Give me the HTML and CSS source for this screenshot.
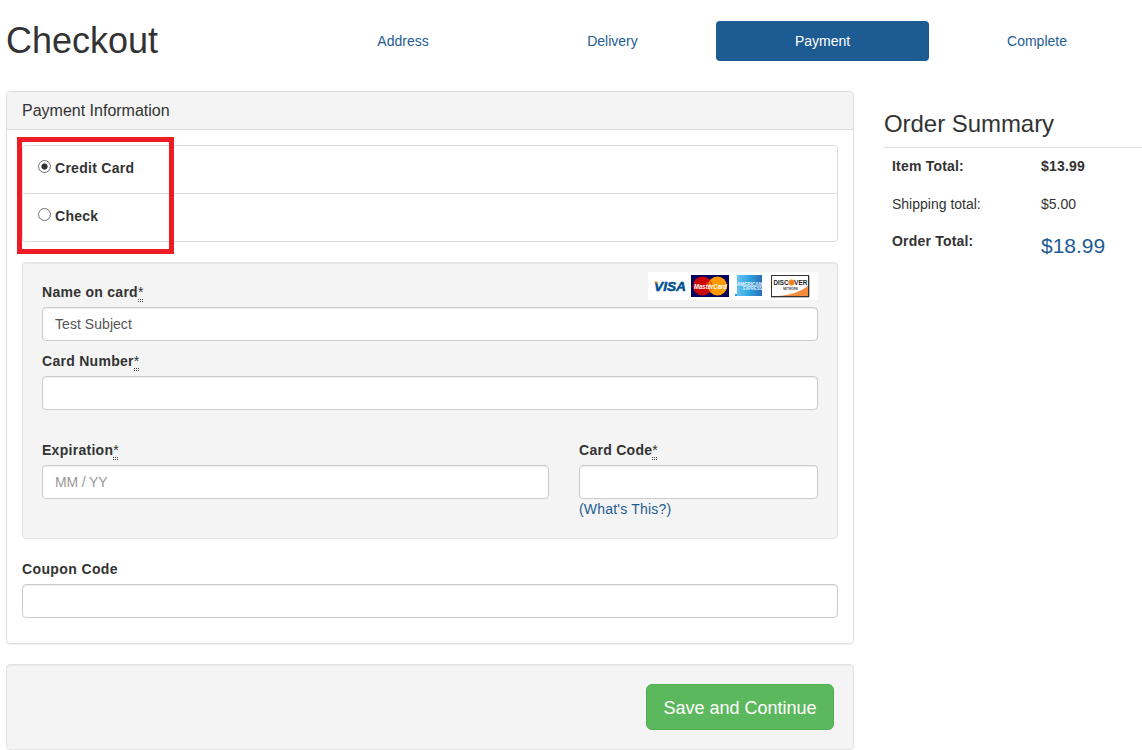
FILE: index.html
```html
<!DOCTYPE html>
<html lang="en">
<head>
<meta charset="utf-8">
<title>Checkout</title>
<link rel="stylesheet" href="styles.css">
</head>
<body>
<header class="top">
  <h1 class="title">Checkout</h1>
  <nav class="steps">
    <a class="step">Address</a>
    <a class="step">Delivery</a>
    <a class="step active">Payment</a>
    <a class="step">Complete</a>
  </nav>
</header>
<div class="columns">
  <main class="main">
    <section class="panel">
      <h2 class="panel-head">Payment Information</h2>
      <div class="panel-body">
        <div class="methods">
          <label class="method"><input class="radio" type="radio" name="method" checked><span class="bold">Credit Card</span></label>
          <label class="method"><input class="radio" type="radio" name="method"><span class="bold">Check</span></label>
          <div class="highlight"></div>
        </div>
        <div class="well card">
          <div class="label-row">
            <label class="bold" for="name">Name on card<abbr class="req">*</abbr></label>
            <svg class="logos" width="170" height="28" viewBox="0 0 170 28">
              <rect width="170" height="28" fill="#fff"/>
              <text x="6" y="18.800" class="visa" textLength="32" lengthAdjust="spacingAndGlyphs">VISA</text>
              <path d="M5.500 9.500h3.500l1.500 3z" fill="#f0a030"/>
              <rect x="43" y="3" width="38" height="22" fill="#00005f"/>
              <circle cx="54.500" cy="14" r="9.500" fill="#cc0505"/>
              <circle cx="69.500" cy="14" r="9.500" fill="#ff9900"/>
              <path d="M62 8.500a9.500 9.500 0 0 1 0 11M58 11h6M58 16.500h6" fill="none" stroke="#e65a00"/>
              <text x="46" y="16.700" class="mc" textLength="33" lengthAdjust="spacingAndGlyphs">MasterCard</text>
              <defs><linearGradient id="amex"><stop offset="0" stop-color="#65c3f2"/><stop offset=".5" stop-color="#2fa3df"/><stop offset="1" stop-color="#2c6db5"/></linearGradient></defs>
              <rect x="89" y="3" width="25" height="21" fill="url(#amex)"/>
              <rect x="87" y="22" width="2" height="2" fill="#2ba0df"/>
              <text x="89" y="13.500" class="amex" textLength="25" lengthAdjust="spacingAndGlyphs">AMERICAN</text>
              <text x="95" y="18.300" class="amex" textLength="19" lengthAdjust="spacingAndGlyphs">EXPRESS</text>
              <rect x="123.500" y="3.500" width="37" height="21" fill="#fff" stroke="#333"/>
              <path d="M131 24q18-1.500 29-10v10z" fill="#f58a3c"/>
              <circle cx="143.500" cy="10.500" r="3" fill="#f58220"/>
              <text x="125.500" y="13.200" class="disc" textLength="15" lengthAdjust="spacingAndGlyphs">DISC</text>
              <text x="146" y="13.200" class="disc" textLength="13.500" lengthAdjust="spacingAndGlyphs">VER</text>
              <text x="135" y="17.500" class="net" textLength="15" lengthAdjust="spacingAndGlyphs">NETWORK</text>
              <path d="M123 25.500h38M161.500 4v21" stroke="#bbb"/>
            </svg>
          </div>
          <input class="field" id="name" value="Test Subject">
          <label class="bold" for="number">Card Number<abbr class="req">*</abbr></label>
          <input class="field" id="number">
          <div class="pair">
            <div>
              <label class="bold" for="exp">Expiration<abbr class="req">*</abbr></label>
              <input class="field" id="exp" placeholder="MM / YY">
            </div>
            <div>
              <label class="bold" for="code">Card Code<abbr class="req">*</abbr></label>
              <input class="field" id="code">
              <a class="help">(What's This?)</a>
            </div>
          </div>
        </div>
        <label class="bold coupon" for="coupon">Coupon Code</label>
        <input class="field" id="coupon">
      </div>
    </section>
    <div class="well actions"><button class="save">Save and Continue</button></div>
  </main>
  <aside class="summary">
    <h2 class="summary-title">Order Summary</h2>
    <dl class="totals">
      <dt class="bold">Item Total:</dt><dd class="bold">$13.99</dd>
      <dt>Shipping total:</dt><dd>$5.00</dd>
      <dt class="bold">Order Total:</dt><dd class="grand">$18.99</dd>
    </dl>
  </aside>
</div>
</body>
</html>
```
FILE: styles.css
```css
* { box-sizing: border-box; }
html, body { height: 750px; overflow: hidden; }
body {
  margin: 0;
  padding-left: 6px;
  background: #fff;
  color: #333;
  font: 14px/20px "Liberation Sans", Arial, sans-serif;
}
h1, h2, dl, dd { margin: 0; font-weight: normal; }

.top { display: flex; height: 91px; }
.title { flex: none; width: 291px; padding-top: 21px; font-size: 36px; line-height: 40px; }
.steps { display: grid; grid-template-columns: 212px 207px 213px 216px; flex: none; height: 40px; margin-top: 21px; }
.step { padding: 10px 0; border-radius: 4px; text-align: center; color: #1d5c92; }
.step.active { background: #1d5c92; color: #fff; }

.columns { display: flex; gap: 30px; }
.main { flex: none; width: 848px; }
.panel { height: 553px; border: 1px solid #ddd; border-radius: 4px; box-shadow: 0 1px 1px rgba(0,0,0,.05); }
.panel-head { height: 38px; padding: 10px 15px 9px; border-bottom: 1px solid #ddd; border-radius: 3px 3px 0 0; background: #f4f4f4; font-size: 16px; line-height: 18px; }
.panel-body { padding: 15px; }

.methods { position: relative; height: 97px; margin-bottom: 20px; border: 1px solid #ddd; border-radius: 4px; }
.method { display: flex; gap: 4px; height: 47px; padding: 12px 15px 0; }
.method + .method { height: 48px; border-top: 1px solid #ddd; }
.radio { appearance: none; flex: none; width: 13px; height: 13px; margin: 2px 0 0; border: 1px solid #707070; border-radius: 50%; background: #fff; }
.radio:checked { background: radial-gradient(circle, #333 0 2.700px, #fff 3.500px); }
.highlight { position: absolute; left: -6px; top: -9px; width: 157px; height: 117px; border: 5px solid #ed1c24; }

.bold { font-weight: bold; letter-spacing: .28px; }
dl .bold { letter-spacing: .2px; }
label.bold { display: block; height: 20px; margin-bottom: 5px; }
label.coupon { letter-spacing: .38px; }
.req {
  padding-bottom: 2px;
  background:
    repeating-linear-gradient(90deg, #444 0 1px, transparent 1px 2px) 0 100% / 100% 1px no-repeat,
    repeating-linear-gradient(90deg, #444 0 1px, transparent 1px 2px) 0 calc(100% - 2px) / 100% 1px no-repeat;
  font-weight: normal;
  letter-spacing: 0;
  text-decoration: none;
}
.well { border: 1px solid #e3e3e3; border-radius: 4px; background: #f4f4f4; box-shadow: inset 0 1px 1px rgba(0,0,0,.05); }
.card { height: 277px; margin-bottom: 20px; padding: 9px 19px 0; }
.label-row { display: flex; justify-content: space-between; height: 35px; }
.label-row .bold { margin-top: 10px; }
.logos { display: block; font-family: "Liberation Sans", Arial, sans-serif; font-weight: bold; }
.visa { fill: #005092; stroke: #005092; stroke-width: .5px; font-size: 13px; font-style: italic; }
.mc { fill: #fff; font-size: 7.500px; font-style: italic; }
.amex { fill: #e9f6ff; font-size: 5px; }
.disc { fill: #222; font-size: 7.500px; }
.net { fill: #444; font-size: 3px; }

.field { display: block; width: 100%; height: 34px; padding: 6px 12px; border: 1px solid #ccc; border-radius: 4px; background: #fff; box-shadow: inset 0 1px 1px rgba(0,0,0,.075); color: #555; font: inherit; letter-spacing: .05px; }
.field::placeholder { color: #999; opacity: 1; letter-spacing: -.15px; }
.card > .field + .bold { margin-top: 10px; }
.pair { display: grid; grid-template-columns: 507px 239px; gap: 30px; margin-top: 30px; }
.help { color: #1d5c92; letter-spacing: .2px; }
.actions { display: flex; justify-content: flex-end; height: 86px; margin-top: 20px; padding: 19px; }
.save { width: 188px; height: 46px; padding: 2px 0 0; border: 1px solid #4cae4c; border-radius: 6px; background: #5cb85c; color: #fff; font: 18px/24px "Liberation Sans", Arial, sans-serif; }

.summary { flex: 1; }
.summary-title { height: 57px; padding-top: 20px; border-bottom: 1px solid #ddd; font-size: 24px; line-height: 26px; letter-spacing: -.05px; }
.totals { display: grid; grid-template-columns: 149px 1fr; grid-template-rows: 38px 37px 37px; padding: 8px 8px 0; }
.grand { padding-top: 3px; color: #1d5c92; font-size: 21px; line-height: 23px; }
```
